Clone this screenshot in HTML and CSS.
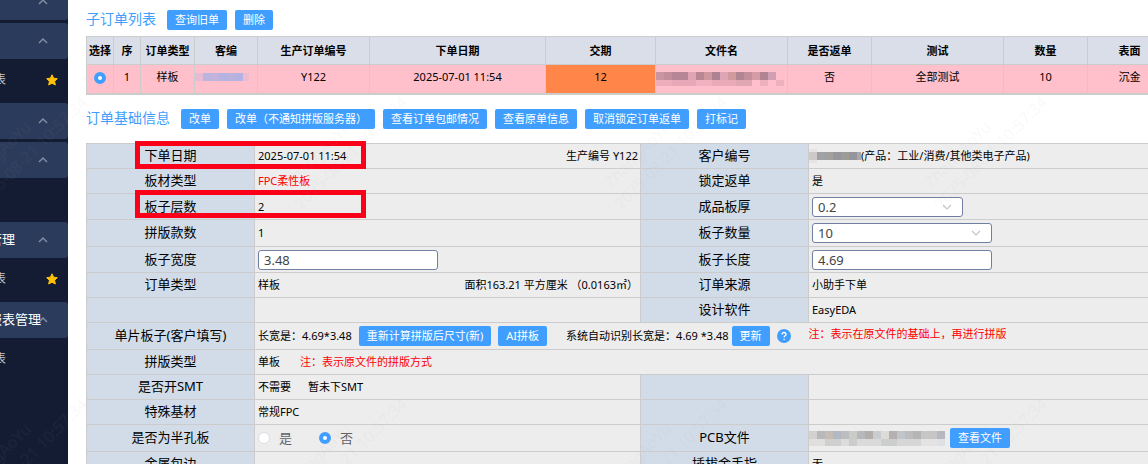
FILE: index.html
```html
<!DOCTYPE html>
<html lang="zh-CN">
<head>
    <meta charset="UTF-8">
    <meta name="viewport" content="width=device-width, initial-scale=1.0">
    <title>订单管理</title>
    <link rel="stylesheet" href="styles.css">
</head>
<body>
    <div class="app">
        <!-- 侧边菜单 -->
        <nav class="sidebar">
            <div class="menu">
                <div class="menu-title"><svg class="arrow" viewBox="0 0 10 6"><path d="M1 5 5 1l4 4"/></svg></div>
                <div class="menu-title"><svg class="arrow" viewBox="0 0 10 6"><path d="M1 5 5 1l4 4"/></svg></div>
                <div class="menu-item">
                    <a href="#">表</a>
                    <svg class="star" viewBox="0 0 12 12"><path d="M6 .8 7.6 4.200l3.700.500-2.700 2.600.700 3.700L6 9.200 2.700 11l.7-3.700L.7 4.700l3.700-.5z"/></svg>
                </div>
                <div class="menu-title"><svg class="arrow" viewBox="0 0 10 6"><path d="M1 5 5 1l4 4"/></svg></div>
                <div class="menu-title"><svg class="arrow" viewBox="0 0 10 6"><path d="M1 5 5 1l4 4"/></svg></div>
                <div class="menu-item"></div>
                <div class="menu-title">管理<svg class="arrow" viewBox="0 0 10 6"><path d="M1 5 5 1l4 4"/></svg></div>
                <div class="menu-item">
                    <a href="#">表</a>
                    <svg class="star" viewBox="0 0 12 12"><path d="M6 .8 7.6 4.200l3.700.500-2.700 2.600.700 3.700L6 9.200 2.700 11l.7-3.700L.7 4.700l3.700-.5z"/></svg>
                </div>
                <div class="menu-title">报表管理<svg class="arrow" viewBox="0 0 10 6"><path d="M1 5 5 1l4 4"/></svg></div>
                <div class="menu-item"><a href="#">表</a></div>
            </div>
        </nav>

        <main class="main">
            <!-- 子订单列表 -->
            <div class="toolbar">
                <h2>子订单列表</h2>
                <button class="btn">查询旧单</button>
                <button class="btn">删除</button>
            </div>
            <div class="list-wrap">
                <table class="list">
                    <colgroup>
                        <col class="w27"><col class="w27"><col class="w54"><col class="w63"><col class="w112"><col class="w176"><col class="w110"><col class="w132"><col class="w84"><col class="w132"><col class="w84"><col class="w84">
                    </colgroup>
                    <thead>
                        <tr>
                            <th>选择</th>
                            <th>序</th>
                            <th>订单类型</th>
                            <th>客编</th>
                            <th>生产订单编号</th>
                            <th>下单日期</th>
                            <th>交期</th>
                            <th>文件名</th>
                            <th>是否返单</th>
                            <th>测试</th>
                            <th>数量</th>
                            <th>表面</th>
                        </tr>
                    </thead>
                    <tbody>
                        <tr>
                            <td><input type="radio" name="order" class="radio" aria-label="选择" checked></td>
                            <td>1</td>
                            <td>样板</td>
                            <td>
                                <svg class="mosaic" width="54" height="8" shape-rendering="crispEdges">
                                    <path fill="#e7bbd4" d="M0 0h8v8H0z"/><path fill="#bcb3df" d="M8 0h8v8H8z"/><path fill="#c3b2dc" d="M16 0h8v8h-8z"/><path fill="#b3b2e0" d="M24 0h8v8h-8z"/><path fill="#bbb1dd" d="M32 0h8v8h-8z"/><path fill="#b2b3e2" d="M40 0h8v8h-8z"/><path fill="#efbbcf" d="M48 0h6v8h-6z"/>
                                </svg>
                            </td>
                            <td>Y122</td>
                            <td>2025-07-01 11:54</td>
                            <td class="due">12</td>
                            <td class="file">
                                <svg class="mosaic" width="128" height="14" shape-rendering="crispEdges">
                                    <path fill="#c795a3" d="M0 0h8v8H0z"/><path fill="#c28e9c" d="M8 0h8v8H8z"/><path fill="#b68696" d="M16 0h16v8H16z"/><path fill="#dfa5b4" d="M32 0h8v8h-8z"/><path fill="#b98693" d="M40 0h8v8h-8z"/><path fill="#cf989f" d="M48 0h8v8h-8z"/><path fill="#ad8293" d="M56 0h8v8h-8z"/><path fill="#dda5b5" d="M64 0h8v8h-8z"/><path fill="#d29a9f" d="M72 0h8v8h-8z"/><path fill="#b18594" d="M80 0h8v8h-8z"/><path fill="#c38f9a" d="M88 0h8v8h-8z"/><path fill="#d59ca6" d="M96 0h8v8h-8z"/><path fill="#b08492" d="M104 0h8v8h-8z"/><path fill="#d0a0b2" d="M112 0h8v8h-8z"/>
                                    <path fill="#edadbb" d="M0 8h16v6H0z"/><path fill="#e7a9b7" d="M16 8h24v6H16z"/><path fill="#f2b1bf" d="M40 8h16v6H40z"/><path fill="#e9abb8" d="M56 8h24v6H56z"/><path fill="#e0a6b2" d="M80 8h16v6H80z"/><path fill="#edb0bd" d="M104 8h8v6h-8zM120 8h8v6h-8z"/>
                                </svg>
                            </td>
                            <td>否</td>
                            <td>全部测试</td>
                            <td>10</td>
                            <td>沉金</td>
                        </tr>
                    </tbody>
                </table>
            </div>

            <!-- 订单基础信息 -->
            <div class="toolbar">
                <h2>订单基础信息</h2>
                <button class="btn">改单</button>
                <button class="btn">改单（不通知拼版服务器）</button>
                <button class="btn">查看订单包邮情况</button>
                <button class="btn">查看原单信息</button>
                <button class="btn">取消锁定订单返单</button>
                <button class="btn">打标记</button>
            </div>
            <div class="info-wrap">
                <table class="info">
                    <colgroup>
                        <col class="w168"><col class="w386"><col class="w168"><col class="w386">
                    </colgroup>
                    <tbody>
                        <tr>
                            <th>下单日期</th>
                            <td><div class="line between"><span>2025-07-01 11:54</span><span>生产编号 Y122</span></div></td>
                            <th>客户编号</th>
                            <td class="flush">
                                <div class="line">
                                    <svg class="mosaic" width="52" height="14" shape-rendering="crispEdges">
                                        <path fill="#e6e4e4" d="M0 0h8v14H0z"/><path fill="#cdc9c7" d="M0 3h8v8H0z"/><path fill="#9fa1a4" d="M8 3h8v8H8z"/><path fill="#a1a09c" d="M16 3h8v8h-8z"/><path fill="#97979b" d="M24 3h8v8h-8z"/><path fill="#9c9d97" d="M32 3h8v8h-8z"/><path fill="#95959c" d="M40 3h8v8h-8z"/><path fill="#a9aaae" d="M48 3h4v8h-4z"/>
                                    </svg>
                                    <span>(产品：工业/消费/其他类电子产品)</span>
                                </div>
                            </td>
                        </tr>
                        <tr>
                            <th>板材类型</th>
                            <td class="red">FPC柔性板</td>
                            <th>锁定返单</th>
                            <td>是</td>
                        </tr>
                        <tr class="mid">
                            <th>板子层数</th>
                            <td>2</td>
                            <th><label for="thickness">成品板厚</label></th>
                            <td>
                                <div class="select narrow">
                                    <select id="thickness" class="field"><option>0.2</option></select>
                                    <svg class="down" viewBox="0 0 10 6"><path d="M1 1l4 4 4-4"/></svg>
                                </div>
                            </td>
                        </tr>
                        <tr class="tall">
                            <th>拼版款数</th>
                            <td>1</td>
                            <th><label for="count">板子数量</label></th>
                            <td>
                                <div class="select">
                                    <select id="count" class="field"><option>10</option></select>
                                    <svg class="down" viewBox="0 0 10 6"><path d="M1 1l4 4 4-4"/></svg>
                                </div>
                            </td>
                        </tr>
                        <tr class="mid">
                            <th><label for="width">板子宽度</label></th>
                            <td><input id="width" class="field" type="text" value="3.48"></td>
                            <th><label for="length">板子长度</label></th>
                            <td><input id="length" class="field" type="text" value="4.69"></td>
                        </tr>
                        <tr>
                            <th>订单类型</th>
                            <td><div class="line between"><span>样板</span><span>面积163.21 平方厘米 （0.0163㎡）</span></div></td>
                            <th>订单来源</th>
                            <td>小助手下单</td>
                        </tr>
                        <tr>
                            <th></th>
                            <td></td>
                            <th>设计软件</th>
                            <td>EasyEDA</td>
                        </tr>
                        <tr class="tall">
                            <th>单片板子(客户填写)</th>
                            <td colspan="2" class="open">
                                <div class="line size">
                                    <span>长宽是：4.69*3.48</span>
                                    <button class="btn">重新计算拼版后尺寸(新)</button>
                                    <button class="btn">AI拼板</button>
                                    <span class="auto">系统自动识别长宽是：4.69 *3.48 <button class="btn">更新</button></span>
                                    <svg class="help" viewBox="0 0 14 14"><circle cx="7" cy="7" r="7"/><path d="M5 5.600C5 4.300 5.800 3.500 7 3.500s2 .8 2 1.900C9 6.700 7.100 6.700 7.100 8.300M7.100 9.700v1.200"/></svg>
                                </div>
                            </td>
                            <td class="red flush open note">注：表示在原文件的基础上，再进行拼版</td>
                        </tr>
                        <tr>
                            <th>拼版类型</th>
                            <td colspan="3"><div class="line far"><span>单板</span><span class="red">注：表示原文件的拼版方式</span></div></td>
                        </tr>
                        <tr>
                            <th>是否开SMT</th>
                            <td><div class="line near"><span>不需要</span><span>暂未下SMT</span></div></td>
                            <th></th>
                            <td></td>
                        </tr>
                        <tr>
                            <th>特殊基材</th>
                            <td>常规FPC</td>
                            <th></th>
                            <td></td>
                        </tr>
                        <tr class="tall">
                            <th>是否为半孔板</th>
                            <td>
                                <div class="line options">
                                    <label><input type="radio" name="half" class="radio">是</label>
                                    <label><input type="radio" name="half" class="radio" checked>否</label>
                                </div>
                            </td>
                            <th>PCB文件</th>
                            <td class="flush">
                                <div class="line pcb">
                                    <svg class="mosaic" width="136" height="15" shape-rendering="crispEdges">
                                        <path fill="#d2d1d0" d="M0 0h8v8H0z"/><path fill="#b8b8b8" d="M8 0h8v8H8z"/><path fill="#c6bcb5" d="M16 0h8v8h-8z"/><path fill="#b3b9c2" d="M24 0h8v8h-8z"/><path fill="#bcbdc0" d="M32 0h8v8h-8z"/><path fill="#cbcbc8" d="M40 0h8v8h-8z"/><path fill="#b7b8ba" d="M48 0h8v8h-8z"/><path fill="#b1aeab" d="M56 0h8v8h-8z"/><path fill="#c9cdd1" d="M64 0h8v8h-8z"/><path fill="#dedbd8" d="M72 0h8v8h-8z"/><path fill="#b5b0b1" d="M80 0h8v8h-8z"/><path fill="#bfc5c8" d="M88 0h8v8h-8z"/><path fill="#bdbcbe" d="M96 0h8v8h-8z"/><path fill="#b5b5b6" d="M104 0h8v8h-8z"/><path fill="#c5c6c5" d="M112 0h16v8h-16z"/><path fill="#b7b8bf" d="M128 0h8v8h-8z"/>
                                        <path fill="#dfdfde" d="M0 8h16v7H0z"/><path fill="#cfcfcf" d="M16 8h16v7H16z"/><path fill="#dcdcdb" d="M32 8h8v7h-8z"/><path fill="#cbcccb" d="M40 8h8v7h-8z"/><path fill="#dadada" d="M48 8h24v7H48z"/><path fill="#cccdcd" d="M72 8h16v7H72z"/><path fill="#d6d6d7" d="M88 8h24v7H88z"/><path fill="#e4e2e2" d="M112 8h16v7h-16z"/><path fill="#dde1e3" d="M128 8h8v7h-8z"/>
                                    </svg>
                                    <button class="btn">查看文件</button>
                                </div>
                            </td>
                        </tr>
                        <tr>
                            <th>金属包边</th>
                            <td></td>
                            <th>插拔金手指</th>
                            <td>无</td>
                        </tr>
                    </tbody>
                </table>
                <!-- 重点标记框 -->
                <span class="mark mark-date"></span>
                <span class="mark mark-layer"></span>
            </div>
        </main>

        <!-- 水印 -->
        <svg class="watermark" aria-hidden="true">
            <defs>
                <pattern id="wm" x="-105" y="-94" width="320" height="302" patternUnits="userSpaceOnUse">
                    <g transform="translate(82 300) rotate(-45)">
                        <text x="8" y="-16">ZhangAoYu</text>
                        <text x="0" y="6">2025-08-21 10:57:34</text>
                    </g>
                </pattern>
            </defs>
            <rect width="100%" height="100%" fill="url(#wm)"/>
        </svg>
    </div>
</body>
</html>
```
FILE: styles.css
```css
* {
    box-sizing: border-box;
}

body {
    margin: 0;
    font-family: "Noto Sans", "Noto Sans CJK SC", sans-serif;
    font-size: 11px;
    line-height: 16px;
    color: #000;
    background: #fff;
}

.app {
    position: relative;
    display: flex;
    height: 100vh;
    overflow: hidden;
}

/* 侧边菜单 */
.sidebar {
    flex: none;
    width: 68px;
    background: #141c34;
    overflow: hidden;
}

.menu {
    margin-top: -19px;
    margin-left: -11px;
}

.menu-title {
    display: flex;
    align-items: center;
    position: relative;
    height: 36px;
    margin-top: 3px;
    padding-bottom: 2px;
    border-radius: 3px;
    background: #2b3b5b;
    color: #fff;
    font-size: 13px;
    white-space: nowrap;
}

.arrow {
    position: absolute;
    top: 15px;
    right: 20px;
    width: 10px;
    height: 6px;
    fill: none;
    stroke: #8490a6;
    stroke-width: 1.4;
}

.menu-item {
    display: flex;
    align-items: center;
    justify-content: space-between;
    height: 41px;
    padding: 0 10px 0 5px;
}

.menu-item a {
    color: #c3c8d2;
    font-size: 12px;
    text-decoration: none;
}

.star {
    width: 12px;
    height: 12px;
    fill: #ffc107;
    stroke: #ffc107;
    stroke-linejoin: round;
}

/* 主区域 */
.main {
    flex: 1;
    min-width: 0;
    padding: 10px 0 0 18px;
    overflow: hidden;
}

.toolbar {
    display: flex;
    align-items: center;
    gap: 8px;
    height: 20px;
}

h2 {
    margin: 0 3px 0 0;
    padding-bottom: 3px;
    font-size: 14px;
    font-weight: normal;
    color: #409eff;
}

.btn {
    height: 20px;
    padding: 0 8px;
    border: none;
    border-radius: 2px;
    background: #409eff;
    color: #fff;
    font-family: inherit;
    font-size: 11px;
    line-height: 20px;
    white-space: nowrap;
    cursor: pointer;
}

table {
    border-collapse: collapse;
    table-layout: fixed;
}

th, td {
    border: 1px solid #ccc;
    white-space: nowrap;
}

.w27 { width: 27px; }
.w54 { width: 54px; }
.w63 { width: 63px; }
.w84 { width: 84px; }
.w110 { width: 110px; }
.w112 { width: 112px; }
.w132 { width: 132px; }
.w168 { width: 168px; }
.w176 { width: 176px; }
.w386 { width: 386px; }

.list-wrap {
    margin: 6px 0 14px;
    border-bottom: 1px solid #ccc;
    background: #ededed;
}

.list {
    width: 1085px;
    text-align: center;
}

.list th {
    height: 28px;
    padding: 0;
    background: #dadee8;
}

.list td {
    height: 29px;
    padding: 0 0 4px;
    background: #ffc0cb;
}

.list .due {
    background: #ff8548;
}

.list .file {
    text-align: left;
    padding-top: 3px;
}

.mosaic {
    display: block;
    flex: none;
}

.radio {
    appearance: none;
    flex: none;
    width: 12px;
    height: 12px;
    margin: 0;
    border: 1px solid #dcdfe6;
    border-radius: 50%;
    background: #fff;
    vertical-align: middle;
}

.radio:checked {
    border: 4px solid #409eff;
}

.info-wrap {
    position: relative;
    margin-top: 14px;
}

.info {
    width: 1109px;
    background: #ededed;
}

.info tr {
    height: 25px;
}

.info .mid {
    height: 26px;
}

.info .tall {
    height: 27px;
}

.info th {
    padding: 0 0 2px;
    background: #d1dce8;
    font-size: 13px;
    font-weight: normal;
}

.info td {
    padding: 0 2px 0 3px;
}

.info .flush {
    padding-left: 0;
}

.info .open {
    border-left-color: #ccc;
    border-right: none;
}

.info .open + .open {
    border-left: none;
}

.info .note {
    padding-bottom: 4px;
}

.red {
    color: #f00;
}

.line {
    display: flex;
    align-items: center;
}

.between {
    justify-content: space-between;
}

.size {
    gap: 7px;
}

.size .auto {
    margin-left: 12px;
}

.near {
    gap: 17px;
}

.far {
    gap: 20px;
}

.pcb {
    gap: 5px;
}

.options {
    gap: 27px;
    color: #606266;
    font-size: 13px;
}

.options label {
    display: flex;
    align-items: center;
    gap: 9px;
}

.help {
    width: 14px;
    height: 14px;
    fill: #409eff;
}

.help path {
    fill: none;
    stroke: #fff;
    stroke-width: 1.3;
}

.field {
    display: block;
    appearance: none;
    width: 180px;
    height: 20px;
    padding: 0 5px;
    border: 1px solid #717fa3;
    border-radius: 3px;
    background: #fff;
    color: #444;
    font-family: inherit;
    font-size: 13px;
    line-height: 18px;
}

.select {
    position: relative;
    width: 180px;
}

.narrow,
.narrow .field {
    width: 151px;
}

.down {
    position: absolute;
    top: 7px;
    right: 11px;
    width: 10px;
    height: 6px;
    fill: none;
    stroke: #c0c4cc;
    stroke-width: 1.2;
    pointer-events: none;
}

.mark {
    position: absolute;
    left: 49px;
    width: 231px;
    height: 28px;
    border: 5px solid #fa0019;
}

.mark-date {
    top: -2px;
}

.mark-layer {
    top: 47px;
}

.watermark {
    position: absolute;
    top: 0;
    left: 0;
    width: 100%;
    height: 100%;
    pointer-events: none;
}

.watermark text {
    font-size: 16px;
    fill: rgba(150, 150, 150, 0.06);
}
```
